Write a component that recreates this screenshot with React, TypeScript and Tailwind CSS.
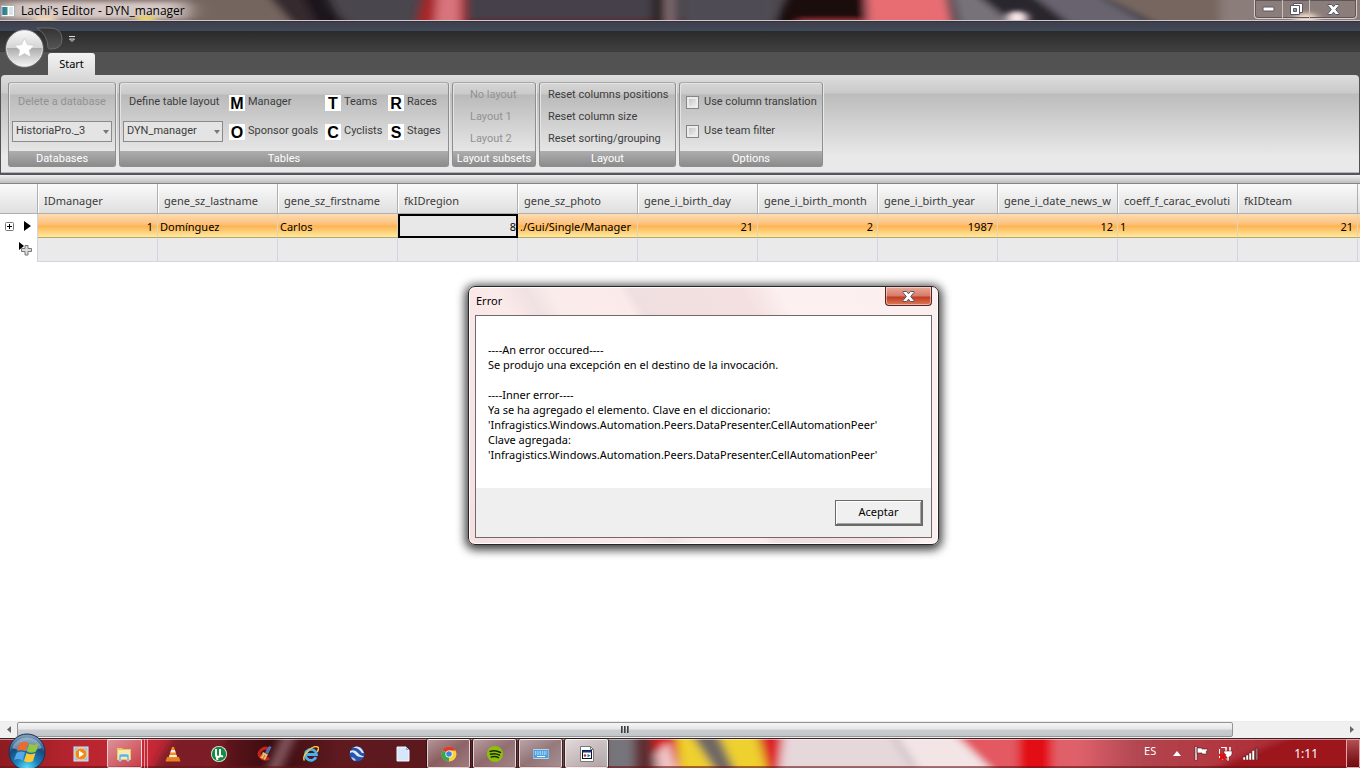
import React, { useState } from 'react';

// ---- Data ----
interface Column {
  name: string;
  value: string;
  numeric?: boolean;
}

const COLUMNS: Column[] = [
  { name: 'IDmanager', value: '1', numeric: true },
  { name: 'gene_sz_lastname', value: 'Domínguez' },
  { name: 'gene_sz_firstname', value: 'Carlos' },
  { name: 'fkIDregion', value: '8', numeric: true },
  { name: 'gene_sz_photo', value: './Gui/Single/Manager' },
  { name: 'gene_i_birth_day', value: '21', numeric: true },
  { name: 'gene_i_birth_month', value: '2', numeric: true },
  { name: 'gene_i_birth_year', value: '1987', numeric: true },
  { name: 'gene_i_date_news_w', value: '12', numeric: true },
  { name: 'coeff_f_carac_evoluti', value: '1' },
  { name: 'fkIDteam', value: '21', numeric: true },
];

const ACTIVE_COLUMN = 'fkIDregion';

const TABLE_BUTTONS = [
  [['M', 'Manager'], ['O', 'Sponsor goals']],
  [['T', 'Teams'], ['C', 'Cyclists']],
  [['R', 'Races'], ['S', 'Stages']],
];

// ---- Title bar ----
const TitleBackdrop: React.FC = () => (
  <svg className="absolute inset-0 h-full w-full" viewBox="0 0 1360 21" preserveAspectRatio="none" aria-hidden="true">
    <defs>
      <filter id="tb" x="-20%" y="-60%" width="140%" height="220%"><feGaussianBlur stdDeviation="5 2" /></filter>
      <filter id="tb2" x="-20%" y="-100%" width="140%" height="300%"><feGaussianBlur stdDeviation="12 2" /></filter>
      <filter id="tb3" x="-50%" y="-100%" width="200%" height="300%"><feGaussianBlur stdDeviation="4 2" /></filter>
    </defs>
    <rect width="1360" height="21" fill="#4a464d" />
    <g filter="url(#tb)">
      <rect x="-20" y="-8" width="270" height="40" fill="#85736f" />
      <path d="M190-8h80l40 40h-120z" fill="#74655f" />
      <path d="M265-8h45l50 40h-60z" fill="#342c2f" />
      <path d="M300-8h25l20 40h-25z" fill="#1d191d" />
      <path d="M424-8h50v40h-60z" fill="#a82629" />
      <path d="M438-8h22v40h-26z" fill="#d8747b" />
      <rect x="466" y="-8" width="190" height="40" fill="#454149" />
      <rect x="466" y="19" width="250" height="8" fill="#5c222c" />
      <rect x="652" y="-8" width="12" height="40" fill="#2b2222" />
      <rect x="666" y="-8" width="8" height="40" fill="#8c7276" />
      <rect x="685" y="-8" width="90" height="40" fill="#504c55" />
      <path d="M790-8h75v40h-95z" fill="#1a1111" />
      <path d="M800 19h70v10h-80z" fill="#98343a" />
      <path d="M866-8h80l8 40h-86z" fill="#e86d73" />
      <path d="M952-8h20l50 40h-60z" fill="#77727a" />
      <path d="M975-8h50l60 40h-60z" fill="#2c252d" />
      <path d="M1030-8h60l70 40h-80z" fill="#67646e" />
      <path d="M1095-8h290v40h-210z" fill="#76665f" />
      <rect x="1220" y="-8" width="160" height="40" fill="#8b7d7a" />
    </g>
    <rect x="2" y="2" width="184" height="17" rx="8" fill="#d6c9c5" filter="url(#tb2)" />
    <g filter="url(#tb3)">
      <ellipse cx="45" cy="20" rx="12" ry="4" fill="#ffdfb8" />
      <ellipse cx="146" cy="20" rx="10" ry="4" fill="#f6dc5c" />
      <ellipse cx="1017" cy="18" rx="11" ry="7" fill="#f6e4e6" />
      <ellipse cx="1306" cy="19" rx="12" ry="6" fill="#f6e0cc" />
    </g>
  </svg>
);

const CloseGlyph: React.FC = () => (
  <svg width="13" height="11" viewBox="0 0 13 11" aria-hidden="true">
    <path d="M1 .5h3.500l2 2.300L8.500.5H12v1L8.700 5.500 12 9.500v1H8.500l-2-2.300-2 2.300H1v-1l3.300-4L1 1.500z" fill="#fff" stroke="#545868" />
  </svg>
);

const TitleBar: React.FC = () => (
  <header className="relative flex h-[22px] shrink-0 items-start justify-between overflow-hidden border-b border-[#33323c]">
    <TitleBackdrop />
    <div className="absolute inset-x-0 bottom-0 h-px bg-[#d3c8cb]" />
    <div className="relative flex h-[21px] items-center gap-[6px] pl-px">
      <svg width="14" height="12" viewBox="0 0 14 12" aria-hidden="true">
        <rect x=".5" y=".5" width="13" height="11" fill="#fff" stroke="#a9b6b8" />
        <rect x="1.500" y="2" width="5" height="8" fill="#2f8f82" />
        <rect x="1.500" y="2" width="2" height="8" fill="#3a6fae" />
        <rect x="8" y="2" width="4" height="8" fill="#dde4e8" />
      </svg>
      <h1 className="font-['Open_Sans',sans-serif] text-[12px] text-black">Lachi&apos;s Editor - DYN_manager</h1>
    </div>
    <div className="relative mr-[3px] flex h-[19px] rounded-b-[4px] border border-t-0 border-[#d8cccc] shadow-[inset_0_0_0_1px_#5f5558]">
      <button aria-label="Minimize" className="flex w-[28px] items-center justify-center border-r border-[#c9bebe]">
        <svg width="13" height="6"><rect x="1" y="1" width="11" height="4" rx="1" fill="#fff" stroke="#545868" /></svg>
      </button>
      <button aria-label="Restore" className="flex w-[27px] items-center justify-center border-r border-[#c9bebe]">
        <svg width="13" height="13">
          <path d="M3.500.5h9v9h-9z" fill="#fff" stroke="#545868" />
          <path d="M.5 2.500h9v9h-9z" fill="#fff" stroke="#545868" />
          <path d="M3.500 5.500h3v3h-3z" fill="#a39796" stroke="#545868" />
        </svg>
      </button>
      <button aria-label="Close" className="flex w-[46px] items-center justify-center">
        <CloseGlyph />
      </button>
    </div>
  </header>
);

// ---- Ribbon ----
interface RibbonGroupProps {
  title: string;
  className: string;
  children: React.ReactNode;
}

const RibbonGroup: React.FC<RibbonGroupProps> = ({ title, className, children }) => (
  <section className={`flex h-[85px] flex-col rounded-[3px] border border-[#8e8e8e] border-t-[#a9a9a9] bg-[linear-gradient(#d6d6d6,#cacaca_11px,#bababa_12px,#e6e6e6_68px)] shadow-[inset_1px_1px_0_#e3e3e3,1px_0_0_#e9e9e9] ${className}`}>
    <div className="min-h-0 flex-1">{children}</div>
    <h2 className="flex h-[15px] justify-center bg-linear-to-b from-[#aeaeae] to-[#8c8c8c] text-[11px] leading-[15px] whitespace-nowrap text-white">
      {title}
    </h2>
  </section>
);

interface ComboProps {
  label: string;
  options: string[];
}

const Combo: React.FC<ComboProps> = ({ label, options }) => (
  <div className="relative h-[21px] w-[100px]">
    <select aria-label={label} className="h-full w-full appearance-none border border-[#8a8a8a] bg-[#e4e4e4] pl-[3px] text-[11px] text-[#3c3c3c]">
      {options.map(o => <option key={o}>{o}</option>)}
    </select>
    <svg className="pointer-events-none absolute top-[9px] right-[3px]" width="6" height="4" aria-hidden="true">
      <path d="M0 0h6L3 4z" fill="#777" />
    </svg>
  </div>
);

const Ribbon: React.FC = () => {
  const [translate, setTranslate] = useState(false);
  const [teamFilter, setTeamFilter] = useState(false);
  const boxClass = 'size-[13px] shrink-0 appearance-none border border-[#858585] bg-linear-to-br from-[#bdbdbd] to-[#f8f8f8] shadow-[inset_0_0_0_2px_#ececec] checked:bg-[#555]';

  return (
    <div className="relative shrink-0 bg-[#525252]">
      <div className="h-[9px] bg-linear-to-b from-[#3f3f4b] to-[#40495a]" />
      {/* Quick access bar */}
      <div className="flex h-[21px] items-center border-b border-[#3c3c3c] bg-linear-to-b from-[#2b2b2b] to-[#404040] pb-[5px] pl-[36px]">
        <svg width="28" height="24" viewBox="0 0 28 24" aria-hidden="true">
          <defs>
            <linearGradient id="qa" x2="0" y2="1"><stop stopColor="#333" /><stop offset="1" stopColor="#555" /></linearGradient>
          </defs>
          <path d="M1 1h14q11 1 11 11 0 10-11 10-2 0-3-1Q12 8 1 1z" fill="url(#qa)" stroke="#696969" />
        </svg>
        <button aria-label="Customize toolbar" className="ml-[4px]">
          <svg width="8" height="8" aria-hidden="true">
            <path d="M1 1.500h6M1.500 4h5L4 6.500z" fill="none" stroke="#ddd" />
          </svg>
        </button>
      </div>
      <button aria-label="Application menu" className="absolute top-[7px] left-[5px]">
        <svg width="39" height="39" viewBox="0 0 39 39" aria-hidden="true">
          <defs>
            <linearGradient id="orb" x2="0" y2="1">
              <stop stopColor="#f8f8f8" /><stop offset=".48" stopColor="#d5d5d5" />
              <stop offset=".5" stopColor="#adadad" /><stop offset="1" stopColor="#f6f6f6" />
            </linearGradient>
          </defs>
          <circle cx="19.500" cy="19.500" r="18" fill="url(#orb)" stroke="#eee" />
          <circle cx="19.500" cy="19.500" r="18.800" fill="none" stroke="#8b8b8b" strokeWidth=".6" />
          <path d="m19.500 9 3 6.600 7 .8-5.200 4.800 1.500 7-6.300-3.600-6.300 3.600 1.500-7-5.200-4.800 7-.8z" fill="#fff" stroke="#c4c4c4" strokeWidth=".6" strokeLinejoin="round" />
        </svg>
      </button>

      <nav className="flex h-[23px] items-end pl-[48px]">
        <button className="h-[22px] w-[47px] rounded-t-[3px] bg-linear-to-b from-[#f4f4f4] to-[#dcdcdc] pt-px text-[11px] text-black">Start</button>
      </nav>

      <div className="mx-px flex h-[98px] gap-[3px] rounded-t-[4px] border-b border-[#b5b5b5] bg-[linear-gradient(#dcdcdc,#cacaca_18px,#bcbcbc_19px,#e9e9e9_82px,#e9e9e9)] pt-[7px] pl-[7px] font-[Roboto,sans-serif] text-[11px] text-[#3c3c3c]">
        <RibbonGroup title="Databases" className="w-[108px]">
          <div className="flex flex-col items-center gap-2 pt-[9px]">
            <button disabled className="h-[21px] whitespace-nowrap text-[#929292]">Delete a database</button>
            <Combo label="Database" options={['HistoriaPro._3']} />
          </div>
        </RibbonGroup>

        <RibbonGroup title="Tables" className="w-[330px]">
          <div className="flex pt-[9px] pl-[3px]">
            <div className="flex w-[106px] shrink-0 flex-col gap-2">
              <button className="h-[21px] pl-[6px] text-left whitespace-nowrap">Define table layout</button>
              <Combo label="Table" options={['DYN_manager']} />
            </div>
            {TABLE_BUTTONS.map((group, i) => (
              <div key={i} className={`flex shrink-0 flex-col gap-2 ${i === 0 ? 'w-[96px]' : 'w-[63px]'}`}>
                {group.map(([letter, label]) => (
                  <button key={label} className="flex h-[21px] items-center gap-[3px] whitespace-nowrap">
                    <span className="h-[16px] w-[16px] shrink-0 bg-white text-center font-['Liberation_Sans',Arial,sans-serif] text-[16px] leading-[17px] font-bold text-black">{letter}</span>
                    {label}
                  </button>
                ))}
              </div>
            ))}
          </div>
        </RibbonGroup>

        <RibbonGroup title="Layout subsets" className="w-[84px]">
          <div className="flex flex-col items-start pt-px pl-[17px] text-[#929292]">
            {['No layout', 'Layout 1', 'Layout 2'].map(l => (
              <button key={l} disabled className="h-[22px] whitespace-nowrap">{l}</button>
            ))}
          </div>
        </RibbonGroup>

        <RibbonGroup title="Layout" className="w-[137px]">
          <div className="flex flex-col items-start pt-px pl-[8px]">
            {['Reset columns positions', 'Reset column size', 'Reset sorting/grouping'].map(l => (
              <button key={l} className="h-[22px] whitespace-nowrap">{l}</button>
            ))}
          </div>
        </RibbonGroup>

        <RibbonGroup title="Options" className="w-[144px]">
          <div className="flex flex-col gap-2 pt-[9px] pl-[6px]">
            <label className="flex h-[21px] items-center gap-[5px] whitespace-nowrap">
              <input type="checkbox" className={boxClass} checked={translate} onChange={e => setTranslate(e.target.checked)} />
              Use column translation
            </label>
            <label className="flex h-[21px] items-center gap-[5px] whitespace-nowrap">
              <input type="checkbox" className={boxClass} checked={teamFilter} onChange={e => setTeamFilter(e.target.checked)} />
              Use team filter
            </label>
          </div>
        </RibbonGroup>
      </div>
      <div className="h-[2px] bg-[#55555c]" />
      <div className="h-[9px] border-b border-[#85858c] bg-linear-to-b from-[#f2f2f2] to-[#bdbdbd]" />
    </div>
  );
};

// ---- Data grid ----
const DataGrid: React.FC = () => (
  <div className="min-h-0 flex-1 overflow-hidden bg-white">
    <table className="w-full table-fixed border-separate border-spacing-0 text-[11px]">
      <colgroup>
        <col className="w-[38px]" />
        {COLUMNS.map(c => <col key={c.name} className="w-[120px]" />)}
        <col />
      </colgroup>
      <thead>
        <tr className="h-[30px] bg-linear-to-b from-[#fafafa] to-[#dedede] text-left text-[#3b3b3b]">
          <th className="border-r border-b border-[#b0b0b0] p-0" />
          {COLUMNS.map(c => (
            <th key={c.name} scope="col" className="border-r border-b border-[#b0b0b0] p-0 pt-[5px] pr-[6px] pl-[6px] font-normal shadow-[inset_1px_0_0_#fff]">
              <div className="overflow-hidden leading-[16px] whitespace-nowrap">{c.name}</div>
            </th>
          ))}
          <th className="border-b border-[#b0b0b0] p-0" />
        </tr>
      </thead>
      <tbody>
        <tr className="h-[24px] text-black">
          <td className="border-r border-[#cfd6df] p-0">
            <div className="flex items-center gap-[10px] pl-[5px]">
              <button aria-label="Expand record">
                <svg width="9" height="9" aria-hidden="true">
                  <rect x=".5" y=".5" width="8" height="8" rx="1" fill="#fff" stroke="#777" />
                  <path d="M2 4.500h5M4.500 2v5" stroke="#000" />
                </svg>
              </button>
              <svg width="7" height="10" aria-hidden="true"><path d="M0 0l7 5-7 5z" fill="#000" /></svg>
            </div>
          </td>
          {COLUMNS.map(c => (
            <td
              key={c.name}
              className={`p-0 pt-[2px] ${c.numeric ? 'text-right' : 'text-left'} ${
                c.name === ACTIVE_COLUMN
                  ? 'border-2 border-black bg-[#e8e8e8]'
                  : `border-r border-b border-r-[#e2d3bd] border-b-[#b7a56a] bg-[linear-gradient(#fddcb2,#fdc27c_10px,#fdb353_12px,#feeb9f)] ${c.numeric ? 'pr-[4px]' : 'pl-[2px]'}`
              }`}
            >
              <div className="overflow-hidden leading-[16px] whitespace-nowrap">{c.value}</div>
            </td>
          ))}
          <td className="border-b border-[#b7a56a] bg-[linear-gradient(#fddcb2,#fdc27c_10px,#fdb353_12px,#feeb9f)] p-0" />
        </tr>
        <tr className="h-[24px]">
          <td className="border-r border-[#cfd6df] p-0 pb-[3px]">
            <svg className="ml-[19px]" width="14" height="14" aria-hidden="true">
              <path d="M0 0l5 4-5 4z" fill="#000" />
              <path d="M6 3.500h3v3h3.500v3H9v3.500H6V9.500H2.500v-3H6z" fill="#ddd" stroke="#777" />
            </svg>
          </td>
          {COLUMNS.map(c => <td key={c.name} className="border-r border-b border-[#cfd6df] bg-[#eaeaea] p-0" />)}
          <td className="border-b border-[#cfd6df] bg-[#eaeaea] p-0" />
        </tr>
      </tbody>
    </table>
  </div>
);

const ScrollBar: React.FC = () => (
  <div className="flex h-[17px] shrink-0 items-start border-t border-[#ececec] bg-[#f0f0f0]">
    <button aria-label="Scroll left" className="flex h-[15px] w-[17px] items-center justify-center">
      <svg width="4" height="7"><path d="M4 0v7L0 3.500z" fill="#666" /></svg>
    </button>
    <div className="flex flex-1">
      <div className="flex h-[15px] w-11/12 items-center justify-center gap-px rounded-[2px] border border-[#949494] bg-[linear-gradient(#f5f5f5,#e6e7e8_6px,#cacccf_7px,#c3c5c8)]">
        <span className="h-[7px] w-[2px] bg-linear-to-r from-[#222] to-[#999]" />
        <span className="h-[7px] w-[2px] bg-linear-to-r from-[#222] to-[#999]" />
        <span className="h-[7px] w-[2px] bg-linear-to-r from-[#222] to-[#999]" />
      </div>
    </div>
    <button aria-label="Scroll right" className="flex h-[15px] w-[17px] items-center justify-center">
      <svg width="4" height="7"><path d="M0 0v7l4-3.500z" fill="#666" /></svg>
    </button>
  </div>
);

// ---- Error dialog ----
const ErrorDialog: React.FC<{ onClose: () => void }> = ({ onClose }) => (
  <div
    role="dialog"
    aria-labelledby="error-title"
    className="absolute top-[286px] left-[468px] w-[471px] rounded-[7px] border border-[#2c2426] bg-[linear-gradient(60deg,#f6dfe1_0,#fbeaea_28%,#f0e1e2_33%,#fbecec_37%,#fbeaea_48%,#f0dfe0_50%,#f4e0e1_68%,#fdf0f0_74%,#fbeeee)] px-[6px] pb-[6px] shadow-[inset_0_0_0_1px_#fff,0_2px_10px_3px_rgba(0,0,0,0.75)]"
  >
    <div className="flex h-[28px] items-start justify-between">
      <h2 id="error-title" className="pl-px text-[11px] leading-[27px] text-black">Error</h2>
      <button
        aria-label="Close"
        onClick={onClose}
        className="flex h-[19px] w-[47px] items-center justify-center rounded-b-[4px] border border-t-0 border-[#5b2226] bg-[linear-gradient(#e9a99b,#d67a68_9px,#c23a20_10px,#dc7a58)] shadow-[inset_0_0_0_1px_rgba(255,255,255,0.45)]"
      >
        <CloseGlyph />
      </button>
    </div>
    <div className="border border-[#716a6b] bg-white">
      <p className="h-[172px] pt-[26px] pl-[12px] text-[11px] leading-[15px] whitespace-pre text-black">
        {`----An error occured----
Se produjo una excepción en el destino de la invocación.

----Inner error----
Ya se ha agregado el elemento. Clave en el diccionario:
'Infragistics.Windows.Automation.Peers.DataPresenter.CellAutomationPeer'
Clave agregada:
'Infragistics.Windows.Automation.Peers.DataPresenter.CellAutomationPeer'`}
      </p>
      <div className="flex h-[49px] items-center justify-end bg-[#efefef] pr-[8px]">
        <button
          onClick={onClose}
          className="h-[26px] w-[88px] border border-r-2 border-b-2 border-[#6a6a6a] bg-[#f0f0f0] text-[11px] text-black shadow-[inset_1px_1px_0_#fff,inset_-1px_-1px_0_#a5a5a5]"
        >
          Aceptar
        </button>
      </div>
    </div>
  </div>
);

// ---- Taskbar ----
const TaskbarBackdrop: React.FC = () => (
  <svg className="absolute inset-0 h-full w-full" viewBox="0 0 1360 30" preserveAspectRatio="none" aria-hidden="true">
    <defs>
      <filter id="bk" x="-20%" y="-60%" width="140%" height="220%"><feGaussianBlur stdDeviation="5 3" /></filter>
      <linearGradient id="bl">
        <stop stopColor="#8e1a22" /><stop offset=".05" stopColor="#b5242e" /><stop offset=".11" stopColor="#c72835" />
        <stop offset=".14" stopColor="#a02834" /><stop offset=".17" stopColor="#5a141a" /><stop offset=".2" stopColor="#3a0c10" />
        <stop offset=".25" stopColor="#5f1a20" /><stop offset=".32" stopColor="#5a181d" /><stop offset=".45" stopColor="#70565a" />
      </linearGradient>
      <linearGradient id="br">
        <stop stopColor="#e5545e" /><stop offset=".3" stopColor="#e0626b" /><stop offset=".45" stopColor="#b04650" />
        <stop offset=".65" stopColor="#b2363f" /><stop offset="1" stopColor="#a01820" />
      </linearGradient>
    </defs>
    <rect width="1360" height="30" fill="url(#bl)" />
    <g filter="url(#bk)">
      <path d="M285-10h14l-22 50h-14z" fill="#80555c" />
      <path d="M178-10h50l-20 50h-60z" fill="#7c1d25" />
      <rect x="606" y="-10" width="30" height="50" fill="#77747c" />
      <rect x="634" y="-10" width="20" height="50" fill="#5f2d31" />
      <path d="M652-10h30v50h-24z" fill="#d8141a" />
      <path d="M656 16l12-14 12 38h-22z" fill="#f0c5c5" />
      <path d="M676-10h80l14 50h-90z" fill="#eed02f" />
      <path d="M688-10h28l22 50h-18z" fill="#6f6763" />
      <path d="M757-10h30l-6 50h-12z" fill="#dd2127" />
      <path d="M784-10h180l60 50h-246z" fill="#e6d7da" />
      <path d="M880-10h80l40 50h-80z" fill="#f3e4e6" />
      <path d="M884-10l28 40h6l-26-40z" fill="#c9bcc0" />
      <path d="M950-10h420v50h-370z" fill="url(#br)" />
      <rect x="1018" y="-10" width="34" height="50" fill="#e30f12" />
      <path d="M1190 40l120-50h70v50z" fill="#9c141c" />
    </g>
    <rect y="28" width="1360" height="2" fill="#6b1216" opacity=".6" />
  </svg>
);

const StartOrb: React.FC = () => (
  <svg width="38" height="38" viewBox="0 0 38 38" aria-hidden="true">
    <defs>
      <radialGradient id="so" cx=".5" cy=".95" r=".9">
        <stop stopColor="#5fe0ff" /><stop offset=".35" stopColor="#1c84bd" /><stop offset=".7" stopColor="#174a7c" /><stop offset="1" stopColor="#7a9dbb" />
      </radialGradient>
    </defs>
    <circle cx="19" cy="19" r="18" fill="url(#so)" stroke="#163352" />
    <path d="M4 15a16 16 0 0 1 30 0q-15 6-30 0z" fill="#fff" opacity=".35" />
    <path d="M11.500 10.500q4.500-3 8.500-.5l-2.500 8q-4-2-8.500.5z" fill="#ee6a2c" />
    <path d="M21.500 10.500q4 2.500 9 0l-2.500 8q-4.500 2.500-9 0z" fill="#93c83e" />
    <path d="M8.500 20q4-2.500 8.500-.5l-2.500 8q-4-2.500-8.500-.5z" fill="#55a9e6" />
    <path d="M18.500 20q4 2.500 9 0l-2.500 8q-4.500 2.500-9 0z" fill="#fcc834" />
  </svg>
);

const QUICK_ICONS: { label: string; icon: React.ReactNode }[] = [
  {
    label: 'Media Player',
    icon: <><rect x="1" y="1" width="14" height="14" fill="#9cc3ea" stroke="#d6e6f6" /><circle cx="8" cy="8" r="6" fill="#f08a1c" stroke="#fbd08b" /><path d="M6 4.500v7l5-3.500z" fill="#fff" /></>,
  },
  {
    label: 'Explorer',
    icon: <><path d="M1 2h5l1 1h8v11H1z" fill="#e8c860" /><path d="M2 4h12v9H2z" fill="#fbeba6" /><path d="M3 15v-5q0-2 2-2h6q2 0 2 2v5h-2v-4H5v4z" fill="#5ab2e2" stroke="#d8f0fc" strokeWidth=".6" /></>,
  },
  {
    label: 'VLC',
    icon: <><path d="M2 11h12l1.500 4.500H.5z" fill="#e8801c" /><path d="M7 1h2l3.500 11h-9z" fill="#f58a1e" /><path d="M6.200 4h3.600l.9 2.500H5.400zM4.600 9h6.800l.6 2H4z" fill="#f5efe8" /></>,
  },
  {
    label: 'uTorrent',
    icon: <><circle cx="8" cy="8" r="8" fill="#e4f2e6" /><circle cx="8" cy="8" r="7.200" fill="#168a42" /><path d="M5 3v6q0 2 2 2t2-2V3M9 8q0 3 3 2M5.500 10l1 4" fill="none" stroke="#fff" strokeWidth="2" /></>,
  },
  {
    label: 'CCleaner',
    icon: <><path d="M12 12q-5 3-8.500-1T5 3.500Q8 1 11 3" fill="none" stroke="#c8231c" strokeWidth="3" /><path d="M12 0l2.500 1-3.500 7-3-1.500z" fill="#4d76b8" /><path d="M6 6l5 2.500L8 14 3 11.500z" fill="#f1b869" /><path d="M5.500 8l-1.500 3M8 9l-2 4" stroke="#b04d22" strokeWidth=".7" /></>,
  },
  {
    label: 'Internet Explorer',
    icon: <><path d="M13 11.200A5.500 5.500 0 1 1 13.500 8.500H4" fill="none" stroke="#45b4ee" strokeWidth="2.800" /><path d="M1.500 14.500Q-1 11 5 5T15 1.200Q16.500 2.500 14 6" fill="none" stroke="#f7c83b" strokeWidth="1.500" /></>,
  },
  {
    label: 'Earth',
    icon: <><circle cx="8" cy="8" r="7.500" fill="#2753ae" /><path d="M1 5q5-2 8 2t6 3q-1 2-3 1-4 0-6-3T1 7zM3 2q6-1 10 5l2 0Q12 0 7 .6z" fill="#dfe9f8" /><path d="M2 11q3 0 5 3l-1 1Q3 14 2 11z" fill="#b5c9ec" /></>,
  },
  {
    label: 'Document',
    icon: <><path d="M2 1h9l3 3v11H2z" fill="#d6e7fb" stroke="#f4f8fd" /><path d="M11 1v3h3z" fill="#7fa5d3" /></>,
  },
];

const RUNNING: { label: string; icon: React.ReactNode }[] = [
  {
    label: 'Chrome',
    icon: <><circle cx="8" cy="8" r="7.500" fill="#fbd13a" /><path d="M8 8L1.500 4.200A7.500 7.500 0 0 1 14.700 4.600H8z" fill="#dd3a2e" /><path d="M8 8l0 7.500A7.500 7.500 0 0 1 1.400 4.400z" fill="#36a650" /><circle cx="8" cy="8" r="3.600" fill="#fff" /><circle cx="8" cy="8" r="2.800" fill="#3f84d8" /></>,
  },
  {
    label: 'Spotify',
    icon: <><circle cx="8" cy="8" r="8" fill="#8fbf0d" /><path d="M3 5.500q5-2 10.500 1M3.500 8.300q4.500-1.600 9 .8M4.200 11q4-1.200 7.300.7" fill="none" stroke="#1c2a04" strokeWidth="1.500" strokeLinecap="round" /></>,
  },
  {
    label: 'Keyboard',
    icon: <><rect y="3.500" width="16" height="9" rx="1" fill="#4aa3df" stroke="#c8e6f8" strokeWidth=".8" /><path d="M2 6h12M2 8h12" stroke="#fff" strokeDasharray="1.300 1" /><path d="M4 10.500h8" stroke="#fff" /></>,
  },
  {
    label: "Lachi's Editor",
    icon: <><path d="M1.500 .5h10l3 3v12h-13z" fill="#fff" stroke="#777" /><path d="M11.500 .5v3h3" fill="none" stroke="#777" /><rect x="3.500" y="4.500" width="9" height="8" fill="#fff" stroke="#111" /><path d="M3.500 5.500h9" stroke="#123a8c" strokeWidth="2" /><circle cx="6" cy="9.500" r="1.300" fill="#c52a22" /><path d="M8.500 8l3 1.500-3 2z" fill="#2769c8" /></>,
  },
];

const Taskbar: React.FC = () => (
  <footer className="relative flex h-[30px] shrink-0 items-stretch border-t border-[#3b2226]">
    <TaskbarBackdrop />
    <div className="absolute inset-x-0 top-0 h-px bg-white/50" />
    <button aria-label="Start menu" className="absolute -top-[6px] left-[8px] h-[35px] overflow-hidden">
      <StartOrb />
    </button>
    <nav className="relative flex pl-[58px]">
      {QUICK_ICONS.map(({ label, icon }, i) => (
        <button key={label} aria-label={label} className="flex w-[46px] items-center justify-center">
          {i === 1 ? (
            <span className="flex h-full gap-[2px]">
              <span className="flex w-[35px] items-center justify-center rounded-[2px] border border-white/70 bg-linear-to-br from-white/50 to-white/10">
                <svg width="16" height="16" viewBox="0 0 16 16">{icon}</svg>
              </span>
              <span className="w-px border-r border-white/50" />
              <span className="w-px border-r border-white/50" />
            </span>
          ) : (
            <svg width="16" height="16" viewBox="0 0 16 16">{icon}</svg>
          )}
        </button>
      ))}
      <div className="flex gap-[3px] pl-px">
        {RUNNING.map(({ label, icon }) => (
          <button
            key={label}
            aria-label={label}
            className={`flex w-[43px] items-center justify-center rounded-[2px] border border-white/70 shadow-[0_0_0_1px_rgba(30,10,12,0.6)] ${
              label === "Lachi's Editor"
                ? 'bg-linear-to-br from-white/80 to-white/45'
                : 'bg-linear-to-br from-white/55 via-white/30 to-white/40'
            }`}
          >
            <svg width="16" height="16" viewBox="0 0 16 16">{icon}</svg>
          </button>
        ))}
      </div>
    </nav>
    <div className="relative ml-auto flex items-center text-[12px] text-white">
      <span className="mr-[17px] pb-[5px] text-[11px]">ES</span>
      <button aria-label="Show hidden icons" className="mr-[13px]">
        <svg width="8" height="5"><path d="M0 5h8L4 0z" fill="#fff" /></svg>
      </button>
      <svg className="mr-[9px]" width="15" height="15" aria-hidden="true">
        <path d="M1 .5h2v14H1zM3 2h5v1h6l-2 3 1 2H8V7H3z" fill="#fff" stroke="#4b1a1f" strokeWidth=".6" />
      </svg>
      <svg className="mr-[10px]" width="15" height="16" aria-hidden="true">
        <path d="M3 1.500h5M1.500 3v10h8" fill="none" stroke="#fff" />
        <path d="M8 1v4M12 1v4" stroke="#fff" strokeWidth="1.500" />
        <path d="M6 5h8v3q-1 3-3 3v4H9v-4Q7 11 6 8z" fill="#fff" stroke="#4b1a1f" strokeWidth=".5" />
        <path d="M1.500 8l6 6M7.500 8l-6 6" stroke="#e30b0b" strokeWidth="2.500" />
      </svg>
      <svg className="mr-[35px]" width="16" height="13" fill="#fff" stroke="#4b1a1f" strokeWidth=".5" aria-hidden="true">
        <path d="M0 10h2.500v3H0zM3 8h2.500v5H3zM6 6h2.500v7H6zM9 3.500h2.500V13H9z" />
        <path d="M12.500 1H15v12h-2.500z" fill="#a1676c" />
      </svg>
      <time className="mr-[28px] pt-px">1:11</time>
      <button aria-label="Show desktop" className="h-full w-[14px] rounded-[1px] border border-[#e6a6a9] bg-linear-to-b from-white/25 to-black/25" />
    </div>
  </footer>
);

export default function App() {
  const [showError, setShowError] = useState(true);

  return (
    <div className="relative flex h-screen flex-col overflow-hidden bg-white font-['Noto_Sans','Segoe_UI',sans-serif]">
      <TitleBar />
      <Ribbon />
      <DataGrid />
      <ScrollBar />
      <Taskbar />
      {showError && <ErrorDialog onClose={() => setShowError(false)} />}
    </div>
  );
}
